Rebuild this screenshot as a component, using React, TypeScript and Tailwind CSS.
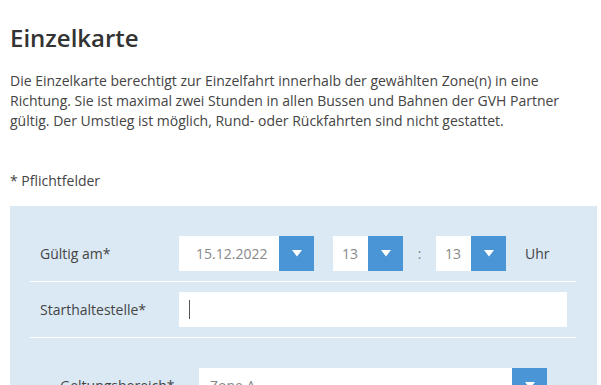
import React from "react";

function Tri() {
  return (
    <svg width="10" height="7" viewBox="0 0 10 7" className="block">
      <polygon points="0,0 10,0 5,6.5" fill="#ffffff" />
    </svg>
  );
}

function BlueBtn() {
  return (
    <div className="w-[35px] h-[35px] bg-[#4a95d5] flex items-center justify-center">
      <Tri />
    </div>
  );
}

export default function App() {
  return (
    <div
      className="w-[601px] h-[385px] overflow-hidden bg-white text-[#444]"
      style={{ fontFamily: '"Open Sans", "Liberation Sans", sans-serif' }}
    >
      <div className="pl-[10px] pt-[22px]">
        <h1 className="text-[24px] leading-[32px] font-semibold text-[#333]">Einzelkarte</h1>
        <p className="mt-[17px] text-[14px] leading-[20px] text-[#444] w-[570px]">
          Die Einzelkarte berechtigt zur Einzelfahrt innerhalb der gewählten Zone(n) in eine
          Richtung. Sie ist maximal zwei Stunden in allen Bussen und Bahnen der GVH Partner
          gültig. Der Umstieg ist möglich, Rund- oder Rückfahrten sind nicht gestattet.
        </p>
        <p className="mt-[40px] text-[14px] leading-[20px]">* Pflichtfelder</p>
        <div className="mt-[15px] w-[587px] h-[200px] bg-[#dbe9f5] pt-[30px] pl-[20px] pr-[21px]">
          <div className="flex items-center h-[35px] pl-[10px] text-[14px]">
            <div className="w-[139px]">Gültig am*</div>
            <div className="flex">
              <div className="w-[100px] h-[35px] bg-white flex items-center pl-[17px] text-[#888]">
                15.12.2022
              </div>
              <BlueBtn />
            </div>
            <div className="flex ml-[19px]">
              <div className="w-[35px] h-[35px] bg-white flex items-center pl-[9px] text-[#888]">13</div>
              <BlueBtn />
            </div>
            <div className="w-[33px] text-center text-[#888]">:</div>
            <div className="flex">
              <div className="w-[35px] h-[35px] bg-white flex items-center pl-[9px] text-[#888]">13</div>
              <BlueBtn />
            </div>
            <div className="ml-[19px]">Uhr</div>
          </div>
          <div className="mt-[10px] h-px bg-white" />
          <div className="mt-[10px] flex items-center h-[35px] pl-[10px] text-[14px]">
            <div className="w-[139px]">Starthaltestelle*</div>
            <div className="w-[388px] h-[35px] bg-white flex items-center pl-[10px]">
              <div className="w-px h-[19px] bg-[#555]" />
            </div>
          </div>
          <div className="mt-[10px] h-px bg-white" />
          <div className="mt-[30px] flex items-start h-[35px] pl-[30px] text-[14px]">
            <div className="w-[139px] pt-[7px]">Geltungsbereich*</div>
            <div className="flex">
              <div className="w-[313px] h-[35px] bg-white flex items-center pl-[11px] text-[#888]">Zone A</div>
              <BlueBtn />
            </div>
          </div>
        </div>
      </div>
    </div>
  );
}
